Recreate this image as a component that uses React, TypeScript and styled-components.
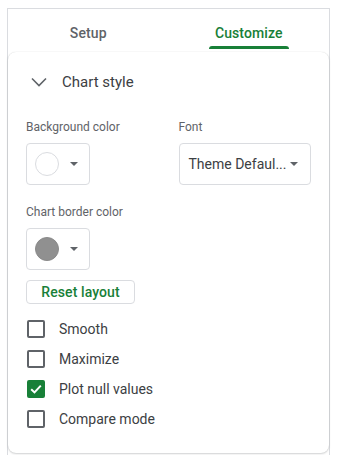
import React from "react";
import styled, { createGlobalStyle } from "styled-components";

const Global = createGlobalStyle`
  html, body { margin: 0; padding: 0; background: #fff; }
  body { font-family: Roboto, "Noto Sans", Arial, sans-serif; -webkit-font-smoothing: antialiased; }
`;

const Frame = styled.div`
  margin: 8px 0 0 7px;
  width: 321px;
  border: 1px solid #dadce0;
  border-bottom: none;
  padding-bottom: 2px;
  box-sizing: content-box;
`;

const Tabs = styled.div`
  display: grid;
  grid-template-columns: 1fr 1fr;
  height: 43px;
`;

const Tab = styled.div<{ $active?: boolean }>`
  display: flex;
  align-items: center;
  justify-content: center;
  padding-top: 5px;
  font-size: 14px;
  font-weight: 500;
  line-height: 16px;
  letter-spacing: 0.1px;
  color: ${(p) => (p.$active ? "#188038" : "#5f6368")};
`;

const TabLabel = styled.span<{ $active?: boolean }>`
  position: relative;
  &::after {
    content: "";
    display: ${(p) => (p.$active ? "block" : "none")};
    position: absolute;
    left: -6px;
    right: -6px;
    top: 21px;
    height: 3px;
    border-radius: 3px 3px 0 0;
    background: #188038;
  }
`;

const Card = styled.div`
  background: #fff;
  border-radius: 8px;
  box-shadow: 0 1px 2px rgba(60, 64, 67, 0.22), 0 0 1px rgba(60, 64, 67, 0.2);
  padding: 0 18px 19px 18px;
`;

const SectionHeader = styled.div`
  display: flex;
  align-items: center;
  height: 58px;
  gap: 15px;
  padding-left: 5px;
  padding-top: 1px;
  box-sizing: border-box;
  font-size: 15px;
  color: #3c4043;
`;

const Grid = styled.div`
  display: grid;
  grid-template-columns: 1fr 1fr;
  column-gap: 20px;
  margin-top: 9px;
`;

const Field = styled.div`
  display: flex;
  flex-direction: column;
  align-items: flex-start;
`;

const Label = styled.div`
  font-size: 12px;
  line-height: 16px;
  color: #5f6368;
  margin-bottom: 8px;
`;

const ColorButton = styled.div`
  box-sizing: border-box;
  width: 64px;
  height: 42px;
  border: 1px solid #dadce0;
  border-radius: 4px;
  display: flex;
  align-items: center;
  padding-left: 8px;
  gap: 11px;
`;

const Swatch = styled.div<{ $color: string }>`
  width: 24px;
  height: 24px;
  border-radius: 50%;
  box-sizing: border-box;
  background: ${(p) => p.$color};
  border: 1px solid ${(p) => (p.$color === "#fff" ? "#dadce0" : "#8a8a8a")};
`;

const Caret = styled.span`
  width: 0;
  height: 0;
  border-left: 4px solid transparent;
  border-right: 4px solid transparent;
  border-top: 4px solid #5f6368;
`;

const Select = styled.div`
  box-sizing: border-box;
  width: 100%;
  height: 42px;
  border: 1px solid #dadce0;
  border-radius: 4px;
  display: flex;
  align-items: center;
  justify-content: space-between;
  padding: 0 12px 0 9px;
  font-size: 14px;
  color: #3c4043;
`;

const SecondField = styled(Field)`
  margin-top: 19px;
`;

const ResetButton = styled.button`
  margin-top: 10px;
  box-sizing: border-box;
  height: 24px;
  width: 109px;
  border: 1px solid #dadce0;
  border-radius: 4px;
  background: #fff;
  font-family: inherit;
  font-size: 14px;
  font-weight: 500;
  letter-spacing: 0.1px;
  color: #188038;
  padding: 0;
  display: flex;
  align-items: center;
  justify-content: center;
`;

const Checks = styled.div`
  margin-top: 10px;
  display: flex;
  flex-direction: column;
`;

const CheckRow = styled.div`
  display: flex;
  align-items: center;
  height: 30px;
  gap: 14px;
  padding-left: 1px;
  font-size: 14px;
  color: #3c4043;
`;

const Box = styled.div<{ $checked?: boolean }>`
  box-sizing: border-box;
  width: 18px;
  height: 18px;
  border-radius: 2px;
  border: 2px solid ${(p) => (p.$checked ? "#188038" : "#5f6368")};
  background: ${(p) => (p.$checked ? "#188038" : "#fff")};
  display: flex;
  align-items: center;
  justify-content: center;
`;

const Chevron = () => (
  <svg width="16" height="10" viewBox="0 0 16 10" fill="none">
    <path d="M1 1.5 L8 8.5 L15 1.5" stroke="#5f6368" strokeWidth="1.6" />
  </svg>
);

const Check = () => (
  <svg width="14" height="14" viewBox="0 0 14 14" fill="none">
    <path d="M2.2 7.2 L5.5 10.4 L11.8 3.6" stroke="#fff" strokeWidth="2" />
  </svg>
);

const options = [
  { label: "Smooth", checked: false },
  { label: "Maximize", checked: false },
  { label: "Plot null values", checked: true },
  { label: "Compare mode", checked: false },
];

export default function App() {
  return (
    <>
      <Global />
      <Frame>
        <Tabs>
          <Tab>
            <TabLabel>Setup</TabLabel>
          </Tab>
          <Tab $active>
            <TabLabel $active>Customize</TabLabel>
          </Tab>
        </Tabs>
        <Card>
          <SectionHeader>
            <Chevron />
            <span>Chart style</span>
          </SectionHeader>
          <Grid>
            <Field>
              <Label>Background color</Label>
              <ColorButton>
                <Swatch $color="#fff" />
                <Caret />
              </ColorButton>
            </Field>
            <Field>
              <Label>Font</Label>
              <Select>
                <span>Theme Defaul...</span>
                <Caret />
              </Select>
            </Field>
          </Grid>
          <SecondField>
            <Label>Chart border color</Label>
            <ColorButton>
              <Swatch $color="#909090" />
              <Caret />
            </ColorButton>
          </SecondField>
          <ResetButton>Reset layout</ResetButton>
          <Checks>
            {options.map((o) => (
              <CheckRow key={o.label}>
                <Box $checked={o.checked}>{o.checked && <Check />}</Box>
                <span>{o.label}</span>
              </CheckRow>
            ))}
          </Checks>
        </Card>
      </Frame>
    </>
  );
}
